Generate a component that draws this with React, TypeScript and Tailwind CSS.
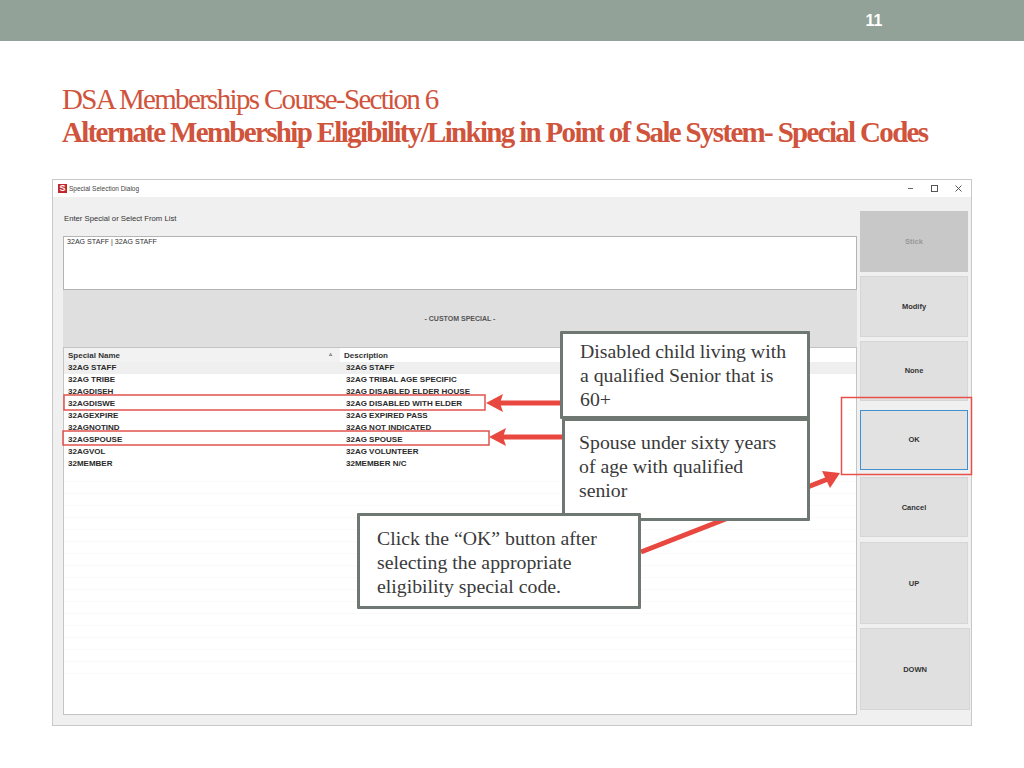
const rows = [
  ['32AG STAFF', '32AG STAFF'],
  ['32AG TRIBE', '32AG TRIBAL AGE SPECIFIC'],
  ['32AGDISEH', '32AG DISABLED ELDER HOUSE'],
  ['32AGDISWE', '32AG DISABLED WITH ELDER'],
  ['32AGEXPIRE', '32AG EXPIRED PASS'],
  ['32AGNOTIND', '32AG NOT INDICATED'],
  ['32AGSPOUSE', '32AG SPOUSE'],
  ['32AGVOL', '32AG VOLUNTEER'],
  ['32MEMBER', '32MEMBER N/C'],
];

const emptyRows = Array.from({ length: 17 }, (_, i) => i);

function SideButton({ label, className }: { label: string; className: string }) {
  return (
    <div className={`flex items-center justify-center text-[7.5px] font-bold ${className}`}>
      {label}
    </div>
  );
}

function Callout({ className, children }: { className: string; children: React.ReactNode }) {
  return (
    <div className={`absolute bg-white border-[3px] border-[#6f7773] rounded-[1px] font-['Liberation_Serif',serif] text-[19.8px] leading-[24px] text-[#3a3a3a] whitespace-nowrap ${className}`}>
      {children}
    </div>
  );
}

export default function App() {
  return (
    <div className="relative w-[1024px] h-[768px] overflow-hidden bg-white font-['Liberation_Sans',sans-serif]">
      {/* top band */}
      <div className="h-[41px] bg-[#93a299] flex items-center justify-end pr-[140px] pt-[1px]">
        <span className="text-[16px] font-bold text-white w-[20px] text-center">11</span>
      </div>

      {/* slide title */}
      <div className="pl-[62px] pt-[42px] h-[138px] font-['Liberation_Serif',serif] text-[29px] leading-[33px] text-[#d0533c] tracking-[-1.68px] whitespace-nowrap">
        <div>DSA Memberships Course-Section 6</div>
        <div className="font-bold">Alternate Membership Eligibility/Linking in Point of Sale System- Special Codes</div>
      </div>

      {/* screenshot of dialog */}
      <div className="ml-[52px] w-[920px] h-[547px] border border-[#c8c8c8] flex flex-col">
        <div className="h-[17px] shrink-0 bg-white flex items-center pl-[5px] text-[6.5px] text-[#444]">
          <span className="w-[9px] h-[9px] bg-[#c4262e] text-white text-[9px] leading-[9px] font-bold text-center mr-[2px]">S</span>
          <span>Special Selection Dialog</span>
          <div className="ml-auto flex items-center gap-[17px] pr-[9px] text-[#555]">
            <svg width="7" height="7" viewBox="0 0 7 7"><path d="M1 3.5h5" stroke="#666" fill="none" /></svg>
            <svg width="7" height="7" viewBox="0 0 7 7"><rect x="0.5" y="0.5" width="6" height="6" stroke="#555" fill="none" /></svg>
            <svg width="7" height="7" viewBox="0 0 7 7"><path d="M.5.5l6 6M6.5.5l-6 6" stroke="#555" fill="none" /></svg>
          </div>
        </div>

        <div className="flex-1 bg-[#f0f0f0] flex pl-[10px]">
          <div className="w-[794px] shrink-0 flex flex-col pb-[10px]">
            <div className="h-[39px] pt-[16px] pl-[1px] text-[7.7px] leading-[12px] text-[#333]">Enter Special or Select From List</div>
            <div className="h-[54px] bg-white border border-[#b4b4b4] pl-[3px] text-[7.1px] leading-[10px] text-[#333]">32AG STAFF | 32AG STAFF</div>
            <div className="h-[58px] bg-[#dfdfdf] border-b border-[#c4c4c4] flex items-center justify-center pt-[1px] text-[7px] font-bold text-[#555]">- CUSTOM SPECIAL -</div>
            <div className="flex-1 bg-white border border-[#c4c4c4] border-t-0 overflow-hidden">
              <div className="h-[14px] flex text-[8px] leading-[15px] font-bold text-[#333]">
                <div className="w-[276px] bg-[#f2f2f2] pl-[4px] relative">
                  Special Name
                  <span className="absolute right-[8px] top-[-1px] text-[6px] text-[#666]">▵</span>
                </div>
                <div className="flex-1 pl-[4px]">Description</div>
              </div>
              {rows.map(([name, desc], i) => (
                <div key={name} className={`h-[12px] flex text-[8px] leading-[12px] font-bold text-[#2a2a2a] ${i === 0 ? 'bg-[#efefef]' : ''}`}>
                  <div className="w-[276px] pl-[4px]">{name}</div>
                  <div className="flex-1 pl-[6px]">{desc}</div>
                </div>
              ))}
              {emptyRows.map((i) => (
                <div key={i} className="h-[12px] border-b border-[#fafafa]" />
              ))}
            </div>
          </div>

          <div className="w-[108px] ml-[3px] pt-[14px] flex flex-col text-[#333]">
            <SideButton label="Stick" className="h-[61px] mb-[4px] bg-[#c8c8c8] text-[#999]" />
            <SideButton label="Modify" className="h-[61px] mb-[4px] bg-[#e0e0e0] border border-[#d6d6d6]" />
            <SideButton label="None" className="h-[60px] mb-[9px] bg-[#e0e0e0] border border-[#d6d6d6]" />
            <SideButton label="OK" className="h-[60px] mb-[7px] bg-[#e2e2e2] border border-[#3f8fd2]" />
            <SideButton label="Cancel" className="h-[60px] mb-[5px] pt-[1px] bg-[#e0e0e0] border border-[#d6d6d6]" />
            <SideButton label="UP" className="h-[82px] mb-[4px] pt-[2px] bg-[#e0e0e0] border border-[#d6d6d6]" />
            <SideButton label="DOWN" className="h-[82px] w-[110px] pt-[2px] bg-[#e0e0e0] border border-[#d6d6d6]" />
          </div>
        </div>
      </div>

      {/* annotation arrows and highlight boxes */}
      <svg className="absolute left-0 top-0" width="1024" height="768" viewBox="0 0 1024 768" fill="none">
        <rect x="64" y="395" width="421" height="15" stroke="#e0524c" strokeWidth="1.5" />
        <rect x="63" y="431" width="426" height="14" stroke="#e0524c" strokeWidth="1.5" />
        <rect x="841.5" y="397.5" width="130" height="77" stroke="#e8504a" strokeWidth="1.5" />
        <path d="M498 403H562" stroke="#e8483f" strokeWidth="5" />
        <path d="M486 403L503 394L500 403L503 412Z" fill="#e8483f" />
        <path d="M501 437H564" stroke="#e8483f" strokeWidth="5" />
        <path d="M489 437L506 428L503 437L506 446Z" fill="#e8483f" />
        <path d="M641 552L828 479" stroke="#e8483f" strokeWidth="5" />
        <path d="M840 473L822 471L830 488Z" fill="#e8483f" />
      </svg>

      {/* text callouts */}
      <Callout className="left-[560px] top-[331px] w-[250px] h-[88px] pl-[17px] pt-[5px]">
        Disabled child living with<br />a qualified Senior that is<br />60+
      </Callout>
      <Callout className="left-[562px] top-[418px] w-[248px] h-[103px] pl-[14px] pt-[9px]">
        Spouse under sixty years<br />of age with qualified<br />senior
      </Callout>
      <Callout className="left-[357px] top-[513px] w-[284px] h-[96px] pl-[17px] pt-[10px]">
        Click the “OK” button after<br />selecting the appropriate<br />eligibility special code.
      </Callout>
    </div>
  );
}
